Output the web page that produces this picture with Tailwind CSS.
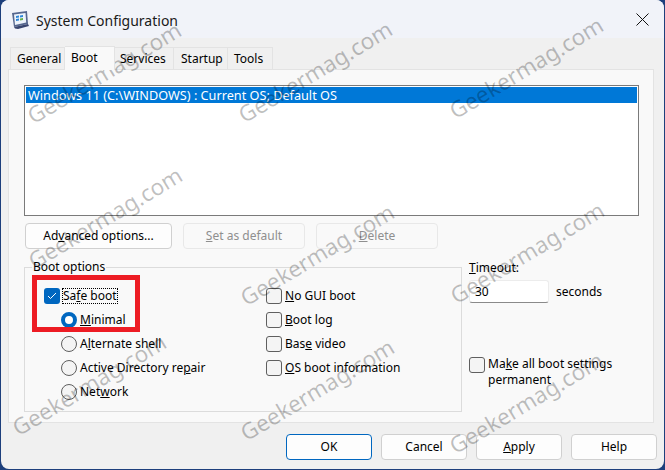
<!DOCTYPE html>
<html lang="en">
<head>
  <meta charset="UTF-8" />
  <title>System Configuration</title>
  <script src="https://cdn.jsdelivr.net/npm/@tailwindcss/browser@4"></script>
</head>
<body class="w-[665px] h-[470px] overflow-hidden bg-[#1d3f7c] font-['Noto_Sans',sans-serif] text-[12px] text-black">
  <div class="relative w-[663px] h-[469px] ml-px rounded-[8px] overflow-hidden bg-[#f0f0f0] flex flex-col">

    <!-- Title bar -->
    <div class="h-[38px] bg-[#f1f3f9] flex items-center pl-[10px] pr-[15px] pt-[2px]">
      <svg width="19" height="19" viewBox="0 0 19 19">
        <path d="M1 2l15-2 1 13-14 3z" fill="#56678f"/>
        <path d="M3 3.500l11.500-1.500.700 9.500L4 14z" fill="#eef4fc"/>
        <path d="M5 5l3-.4v2l-3 .4zM9 4.500l3-.4v2l-3 .4zM5 8l3-.4v2l-3 .4z" fill="#2f86d8"/>
        <path d="M9 7.500l3-.4v2l-3 .4z" fill="#66b04a"/>
        <path d="M3 16l14-3 1 2-11 3-3-.5z" fill="#39456f"/>
      </svg>
      <span class="ml-[6px] text-[14px] text-[#1a1a1a]">System Configuration</span>
      <svg class="ml-auto -mt-[2px]" width="13" height="13" viewBox="0 0 13 13"><path d="M.5.500l12 12M12.500.500l-12 12" stroke="#111" stroke-width="1"/></svg>
    </div>

    <!-- Tabs -->
    <div class="flex h-[31px] pl-[9px] items-end">
      <div class="h-[22px] w-[55px] pl-[6px] pt-px flex items-center border border-b-0 border-[#e3e3e3] bg-[#f0f0f0]">General</div>
      <div class="h-[24px] w-[50px] pl-[6px] pb-[2px] flex items-center border border-b-0 border-l-0 border-[#e3e3e3] bg-[#f9f9f9] relative top-px z-10">Boot</div>
      <div class="h-[22px] w-[59px] pl-[5px] pt-px flex items-center border border-b-0 border-l-0 border-[#e3e3e3]">Services</div>
      <div class="h-[22px] w-[54px] pl-[7px] pt-px flex items-center border border-b-0 border-l-0 border-[#e3e3e3]">Startup</div>
      <div class="h-[22px] w-[45px] pl-[6px] pt-px flex items-center border border-b-0 border-l-0 border-[#e3e3e3]">Tools</div>
    </div>

    <!-- Tab panel -->
    <div class="mx-[7px] h-[354px] w-[646px] border border-[#e3e3e3] bg-[#f9f9f9] pt-[15px] pl-[15px] pr-[14px]">
      <div class="h-[131px] border border-[#7a7a7a] bg-white p-px">
        <div class="h-[16px] leading-[16px] bg-[#0078d7] text-white pl-[2px] text-[12.700px]">Windows 11 (C:\WINDOWS) : Current OS; Default OS</div>
      </div>

      <div class="flex mt-[7px] ml-px gap-[11px]">
        <div class="w-[147px] h-[26px] rounded-[4px] border border-[#d0d0d0] bg-[#fdfdfd] flex items-center justify-center"><span>Ad<u>v</u>anced options...</span></div>
        <div class="w-[122px] h-[26px] rounded-[4px] border border-[#e8e8e8] flex items-center justify-center text-[#8f8f8f]"><span><u>S</u>et as default</span></div>
        <div class="w-[122px] h-[26px] rounded-[4px] border border-[#e8e8e8] flex items-center justify-center text-[#8f8f8f]"><span><u>D</u>elete</span></div>
      </div>

      <div class="flex mt-[18px]">
        <!-- Boot options -->
        <fieldset class="w-[438px] h-[145px] border border-[#dcdcdc] relative">
          <span class="absolute left-[7px] -top-[9px] bg-[#f9f9f9] px-px leading-[16px]">Boot options</span>
          <div class="flex pt-[20px]">
            <div class="w-[241px] flex flex-col gap-[8px] pl-[19px]">
              <div class="flex items-center h-[16px]">
                <span class="w-[16px] h-[16px] rounded-[3px] bg-[#0067c0] flex items-center justify-center">
                  <svg width="10" height="8" viewBox="0 0 10 8"><path d="M1 4l2.500 2.500L9 1" fill="none" stroke="#fff" stroke-width="1"/></svg>
                </span>
                <span class="ml-[2px] border border-dotted border-black leading-[14px] h-[16px]">Sa<u>f</u>e boot</span>
              </div>
              <div class="flex items-center h-[16px] pl-[17px]">
                <span class="w-[16px] h-[16px] rounded-full border-[4px] border-[#0067c0] bg-white"></span>
                <span class="ml-[3px]"><u>M</u>inimal</span>
              </div>
              <div class="flex items-center h-[16px] pl-[17px]">
                <span class="w-[16px] h-[16px] rounded-full border border-[#5f5f5f] bg-[#f4f4f4]"></span>
                <span class="ml-[3px]">A<u>l</u>ternate shell</span>
              </div>
              <div class="flex items-center h-[16px] pl-[17px]">
                <span class="w-[16px] h-[16px] rounded-full border border-[#5f5f5f] bg-[#f4f4f4]"></span>
                <span class="ml-[3px]">Active Directory re<u>p</u>air</span>
              </div>
              <div class="flex items-center h-[16px] pl-[17px]">
                <span class="w-[16px] h-[16px] rounded-full border border-[#5f5f5f] bg-[#f4f4f4]"></span>
                <span class="ml-[3px]">Net<u>w</u>ork</span>
              </div>
            </div>
            <div class="flex flex-col gap-[8px]">
              <div class="flex items-center h-[16px]">
                <span class="w-[16px] h-[16px] rounded-[3px] border border-[#5f5f5f] bg-[#f4f4f4]"></span>
                <span class="ml-[3px]"><u>N</u>o GUI boot</span>
              </div>
              <div class="flex items-center h-[16px]">
                <span class="w-[16px] h-[16px] rounded-[3px] border border-[#5f5f5f] bg-[#f4f4f4]"></span>
                <span class="ml-[3px]"><u>B</u>oot log</span>
              </div>
              <div class="flex items-center h-[16px]">
                <span class="w-[16px] h-[16px] rounded-[3px] border border-[#5f5f5f] bg-[#f4f4f4]"></span>
                <span class="ml-[3px]">Bas<u>e</u> video</span>
              </div>
              <div class="flex items-center h-[16px]">
                <span class="w-[16px] h-[16px] rounded-[3px] border border-[#5f5f5f] bg-[#f4f4f4]"></span>
                <span class="ml-[3px]"><u>O</u>S boot information</span>
              </div>
            </div>
          </div>
        </fieldset>

        <!-- Timeout column -->
        <div class="ml-[7px] -mt-[7px] flex flex-col">
          <span class="leading-[16px]"><u>T</u>imeout:</span>
          <div class="flex items-center mt-[4px]">
            <div class="w-[80px] h-[23px] bg-white border border-[#ececec] border-b-[#8a8a8a] rounded-[3px] pl-[5px] leading-[21px]">30</div>
            <span class="ml-[7px]">seconds</span>
          </div>
          <div class="flex mt-[53px]">
            <span class="w-[16px] h-[16px] mt-[1px] shrink-0 rounded-[3px] border border-[#5f5f5f] bg-[#f4f4f4]"></span>
            <span class="ml-[3px] leading-[16px]">Ma<u>k</u>e all boot settings<br>permanent</span>
          </div>
        </div>
      </div>
    </div>

    <!-- Dialog buttons -->
    <div class="flex justify-end gap-[9px] pr-[7px] mt-[11px]">
      <div class="w-[86px] h-[26px] rounded-[4px] border border-[#0067c0] bg-[#fdfdfd] flex items-center justify-center">OK</div>
      <div class="w-[86px] h-[26px] rounded-[4px] border border-[#d0d0d0] bg-[#fdfdfd] flex items-center justify-center">Cancel</div>
      <div class="w-[86px] h-[26px] rounded-[4px] border border-[#d0d0d0] bg-[#fdfdfd] flex items-center justify-center"><span><u>A</u>pply</span></div>
      <div class="w-[86px] h-[26px] rounded-[4px] border border-[#d0d0d0] bg-[#fdfdfd] flex items-center justify-center">Help</div>
    </div>

    <!-- Highlight box -->
    <div class="absolute left-[31px] top-[275px] w-[108px] h-[57px] border-[5px] border-[#ed1c24]"></div>

    <!-- Watermarks -->
    <span class="absolute left-[16px] top-[59px] -rotate-[31deg] text-[22.500px] leading-[28px] text-black/25 pointer-events-none">Geekermag.com</span>
    <span class="absolute left-[227px] top-[58px] -rotate-[31deg] text-[22.500px] leading-[28px] text-black/25 pointer-events-none">Geekermag.com</span>
    <span class="absolute left-[438px] top-[54px] -rotate-[31deg] text-[22.500px] leading-[28px] text-black/25 pointer-events-none">Geekermag.com</span>
    <span class="absolute left-[17px] top-[204px] -rotate-[31deg] text-[22.500px] leading-[28px] text-black/25 pointer-events-none">Geekermag.com</span>
    <span class="absolute left-[229px] top-[241px] -rotate-[31deg] text-[22.500px] leading-[28px] text-black/25 pointer-events-none">Geekermag.com</span>
    <span class="absolute left-[439px] top-[239px] -rotate-[31deg] text-[22.500px] leading-[28px] text-black/25 pointer-events-none">Geekermag.com</span>
    <span class="absolute left-[1px] top-[371px] -rotate-[31deg] text-[22.500px] leading-[28px] text-black/25 pointer-events-none">Geekermag.com</span>
    <span class="absolute left-[229px] top-[376px] -rotate-[31deg] text-[22.500px] leading-[28px] text-black/25 pointer-events-none">Geekermag.com</span>
    <span class="absolute left-[438px] top-[389px] -rotate-[31deg] text-[22.500px] leading-[28px] text-black/25 pointer-events-none">Geekermag.com</span>
  </div>
</body>
</html>
